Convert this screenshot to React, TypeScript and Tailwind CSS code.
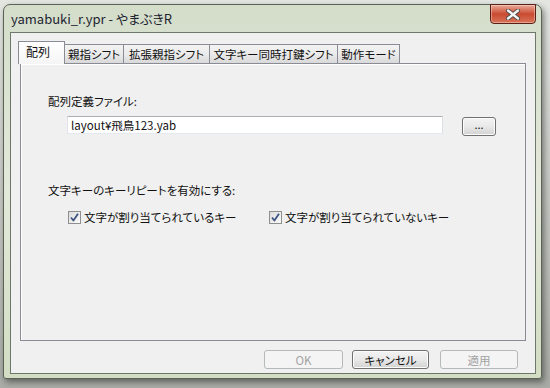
import React from "react";

const jp = "font-['Noto_Sans_CJK_JP','Noto_Sans',sans-serif] [font-feature-settings:'palt']";

const tabs = [
  { label: "配列", w: "w-[47px]" },
  { label: "親指シフト", w: "w-[60px]" },
  { label: "拡張親指シフト", w: "w-[87px]" },
  { label: "文字キー同時打鍵シフト", w: "w-[129px]" },
  { label: "動作モード", w: "w-[63px]" },
];

const CheckBox = ({ label }: { label: string }) => (
  <label className="flex items-center gap-[3px]">
    <span className="flex h-[13px] w-[13px] items-center justify-center border border-[#8e8f8f] bg-gradient-to-br from-[#dcdcdc] to-[#fbfbfb]">
      <svg width="9" height="9" viewBox="0 0 9 9">
        <path d="M1 4.5 L3.4 7.5 L8 0.8" fill="none" stroke="#3d5482" strokeWidth="1.8" strokeLinejoin="round" />
      </svg>
    </span>
    <span className="text-[11.5px] leading-[16px] text-[#111]">{label}</span>
  </label>
);

const DlgButton = ({ label, w, disabled }: { label: string; w: string; disabled?: boolean }) => (
  <button
    className={
      disabled
        ? `${w} h-[19px] rounded-[3px] border border-[#b5b9bc] bg-[#f4f4f4] text-[11.5px] leading-[16px] text-[#a3a3a3]`
        : `${w} h-[19px] rounded-[3px] border border-[#707070] bg-gradient-to-b from-[#f3f3f3] via-[#e9e9e9] to-[#d2d2d2] text-[11.5px] leading-[16px] text-[#111] shadow-[inset_0_0_0_1px_#fcfcfc]`
    }
  >
    {label}
  </button>
);

export default function App() {
  return (
    <div className={`h-[388px] w-[550px] overflow-hidden bg-gradient-to-b from-[#e4e6e2] to-[#a9aca6] pl-[3px] pt-[4px] ${jp}`}>
      <div className="flex h-[375px] w-[539px] flex-col rounded-t-[7px] rounded-b-[3px] border border-[#5a6356] bg-gradient-to-b from-[#d4ddca] via-[#e3e9da] to-[#d2ddc3] shadow-[2px_3px_6px_rgba(0,0,0,0.45)]">
        {/* title bar */}
        <div className="flex h-[27px] items-start justify-between pl-[7px] pr-[5px]">
          <span className="pt-[6px] text-[13px] leading-[16px] text-[#1d2430]">yamabuki_r.ypr - やまぶきR</span>
          <button className="-mt-px flex h-[20px] w-[46px] items-center justify-center rounded-b-[4px] border border-[#5c1f14] bg-gradient-to-b from-[#e9a796] via-[#c94a30] to-[#d9745a] shadow-[inset_0_0_0_1px_rgba(255,255,255,0.35)]">
            <svg width="16" height="11" viewBox="0 0 16 11">
              <path d="M3 1.5 L13 9.5 M13 1.5 L3 9.5" stroke="#4a4a4a" strokeWidth="4.2" strokeLinecap="round" />
              <path d="M3 1.5 L13 9.5 M13 1.5 L3 9.5" stroke="#f4f4f4" strokeWidth="2.4" strokeLinecap="round" />
            </svg>
          </button>
        </div>

        {/* client area */}
        <div className="ml-[6px] mr-[5px] mb-[4px] flex flex-1 flex-col border border-[#6d776a] bg-[#f0f0f0]">
          {/* tab strip */}
          <div className="ml-[7px] mt-[8px] flex h-[22px] items-end">
            {tabs.map((t, i) =>
              i === 0 ? (
                <div
                  key={t.label}
                  className={`${t.w} relative z-10 -mb-px flex h-[23px] items-start border border-b-0 border-[#898c95] bg-gradient-to-b from-white to-[#f5f5f5] pl-[7px] pt-[2px] text-[12px] leading-[16px] text-[#111]`}
                >
                  {t.label}
                </div>
              ) : (
                <div
                  key={t.label}
                  className={`${t.w} -ml-px flex h-[19px] items-center justify-center border border-b-0 border-[#898c95] bg-gradient-to-b from-[#f3f3f3] via-[#ebebeb] to-[#d9d9d9] text-[11.5px] leading-[16px] text-[#111]`}
                >
                  {t.label}
                </div>
              )
            )}
          </div>

          {/* tab panel */}
          <div className="ml-[9px] flex h-[278px] w-[506px] flex-col border border-[#898c95] bg-[#f0f0f0] pl-[27px] shadow-[inset_1px_1px_0_#ffffff]">
            <div className="mt-[29px] text-[11.5px] leading-[16px] text-[#111]">配列定義ファイル:</div>
            <div className="ml-[19px] mt-[7px] flex items-start gap-[19px]">
              <div className="flex h-[18px] w-[376px] items-center border border-[#abadb3] border-b-[#e3e9ef] border-l-[#e2e3ea] border-r-[#dbdfe6] bg-white pl-[3px] text-[11.5px] leading-[16px] text-[#111]">
                layout¥飛鳥123.yab
              </div>
              <button className="mt-px flex h-[19px] w-[34px] items-start justify-center rounded-[3px] border border-[#707070] bg-gradient-to-b from-[#f3f3f3] via-[#e9e9e9] to-[#d2d2d2] text-[11px] leading-[12px] text-[#111] shadow-[inset_0_0_0_1px_#fcfcfc]">
                ...
              </button>
            </div>
            <div className="mt-[46px] text-[11.5px] leading-[16px] text-[#111]">文字キーのキーリピートを有効にする:</div>
            <div className="ml-[20px] mt-[11px] flex items-center">
              <div className="w-[201px]">
                <CheckBox label="文字が割り当てられているキー" />
              </div>
              <CheckBox label="文字が割り当てられていないキー" />
            </div>
          </div>

          {/* dialog buttons */}
          <div className="mt-[9px] flex justify-end pr-[17px]">
            <DlgButton label="OK" w="w-[79px]" disabled />
            <div className="w-[9px]" />
            <DlgButton label="キャンセル" w="w-[77px]" />
            <div className="w-[11px]" />
            <DlgButton label="適用" w="w-[78px]" disabled />
          </div>
        </div>
      </div>
    </div>
  );
}
